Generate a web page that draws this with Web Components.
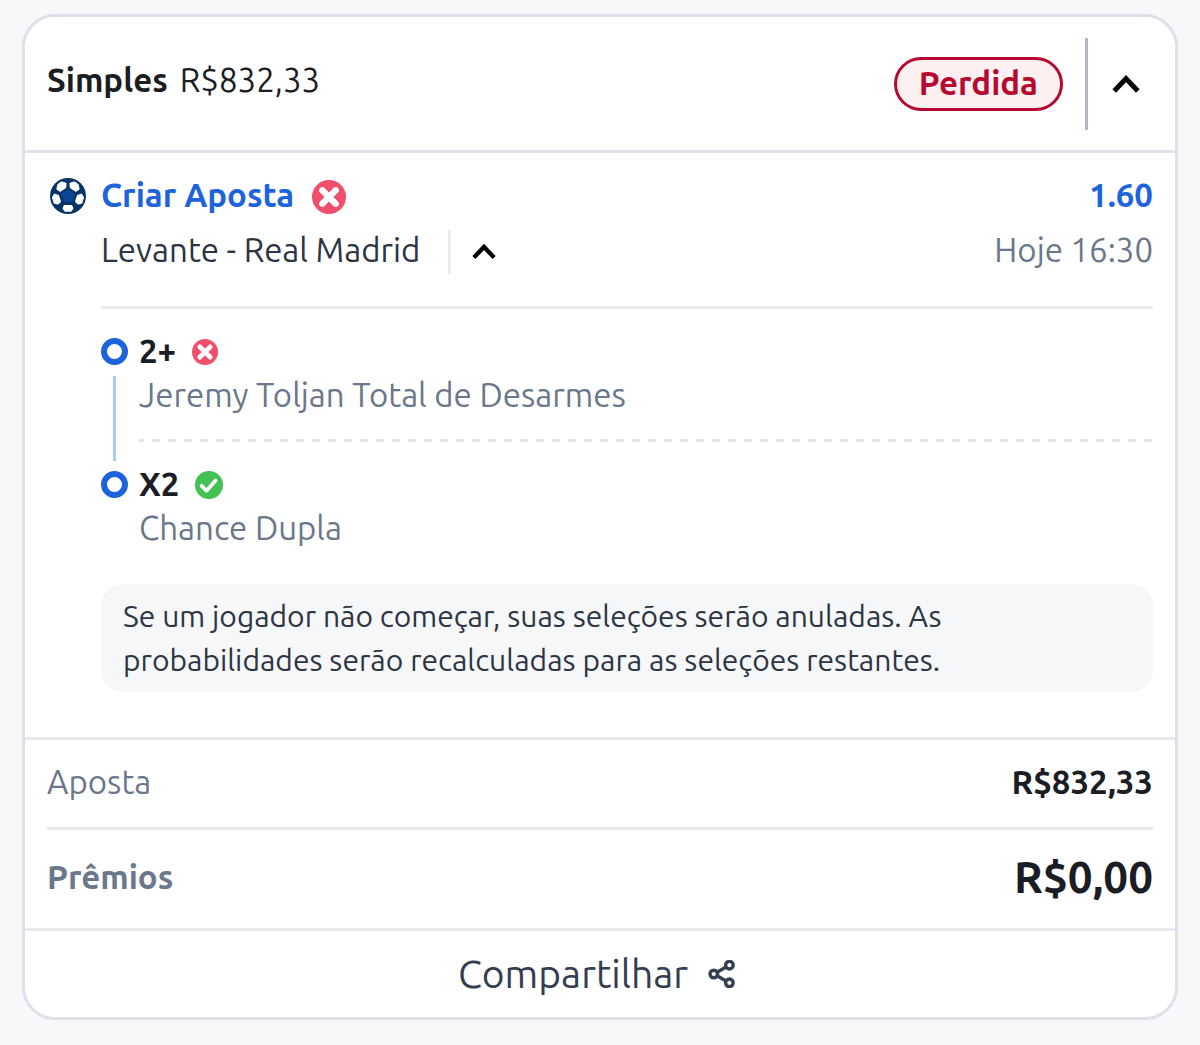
<!DOCTYPE html>
<html lang="pt-BR">
<head>
  <meta charset="utf-8" />
  <meta name="viewport" content="width=device-width, initial-scale=1" />
  <title>Aposta Simples</title>
  <style>
    body {
      margin: 0;
      padding: 14px 22px 25px;
      background-color: #f6f8fa;
      color: #1b1d24;
      font-family: Ubuntu, "Noto Sans", sans-serif;
      font-size: 33px;
      line-height: 44px;
    }
  </style>
</head>
<body>
  <bet-card>
    <bet-header slot="header" kind="Simples" amount="R$832,33">
      <status-badge>Perdida</status-badge>
    </bet-header>
    <bet-event name="Criar Aposta" odds="1.60" match="Levante - Real Madrid" time="Hoje 16:30">
      <bet-leg result="lost" pick="2+" linked>Jeremy Toljan Total de Desarmes</bet-leg>
      <bet-leg result="won" pick="X2">Chance Dupla</bet-leg>
      <bet-note slot="note">Se um jogador não começar, suas seleções serão anuladas. As probabilidades serão recalculadas para as seleções restantes.</bet-note>
    </bet-event>
    <bet-total slot="totals" label="Aposta">R$832,33</bet-total>
    <bet-total slot="totals" label="Prêmios" strong>R$0,00</bet-total>
    <share-button slot="footer">Compartilhar</share-button>
  </bet-card>

  <script>
    class BetCard extends HTMLElement {
      constructor() {
        super();
        this.attachShadow({ mode: "open" });
        this.shadowRoot.innerHTML = `
          <style>
            :host {
              display: block;
              border: 3px solid #dfe1e9;
              border-radius: 33px;
              background-color: #ffffff;
              overflow: hidden;
            }
            header {
              border-bottom: 3px solid #dfe1e9;
            }
            .totals,
            footer {
              border-top: 3px solid #e6e8ee;
            }
            .totals {
              padding: 0 22px;
            }
          </style>
          <article>
            <header><slot name="header"></slot></header>
            <slot></slot>
            <div class="totals"><slot name="totals"></slot></div>
            <footer><slot name="footer"></slot></footer>
          </article>
        `;
      }
    }
    customElements.define("bet-card", BetCard);

    class BetHeader extends HTMLElement {
      constructor() {
        super();
        this.attachShadow({ mode: "open" });
      }

      connectedCallback() {
        this.shadowRoot.innerHTML = `
          <style>
            :host {
              display: flex;
              align-items: center;
              padding: 21px 22px 20px;
            }
            .title {
              display: flex;
              flex: 1;
              gap: 12px;
              padding-bottom: 8px;
            }
            .toggle {
              display: flex;
              align-items: center;
              height: 92px;
              margin-left: 22px;
              padding: 0 13px 0 24px;
              border-left: 3px solid #b4b8c6;
            }
          </style>
          <div class="title">
            <strong>${this.getAttribute("kind")}</strong>
            <span>${this.getAttribute("amount")}</span>
          </div>
          <slot></slot>
          <div class="toggle"><toggle-button label="Recolher aposta"></toggle-button></div>
        `;
      }
    }
    customElements.define("bet-header", BetHeader);

    class StatusBadge extends HTMLElement {
      constructor() {
        super();
        this.attachShadow({ mode: "open" });
        this.shadowRoot.innerHTML = `
          <style>
            :host {
              display: block;
              padding: 1px 22px 3px;
              border: 3px solid #b5092f;
              border-radius: 27px;
              background-color: #feeff1;
              color: #b5092f;
              font-weight: bold;
            }
          </style>
          <slot></slot>
        `;
      }
    }
    customElements.define("status-badge", StatusBadge);

    class ToggleButton extends HTMLElement {
      constructor() {
        super();
        this.attachShadow({ mode: "open" });
      }

      connectedCallback() {
        this.shadowRoot.innerHTML = `
          <style>
            :host {
              display: block;
            }
            button {
              display: block;
              padding: 0;
              border: none;
              background: none;
              color: #000000;
              cursor: pointer;
            }
            svg {
              display: block;
              width: var(--toggle-size, 28px);
            }
          </style>
          <button type="button" aria-expanded="true" aria-label="${this.getAttribute("label")}">
            <svg viewBox="0 0 28 20" fill="none" stroke="currentColor" stroke-width="5">
              <path d="M2.2 17 14 4.6 25.8 17" />
            </svg>
          </button>
        `;
      }
    }
    customElements.define("toggle-button", ToggleButton);

    class ResultIcon extends HTMLElement {
      constructor() {
        super();
        this.attachShadow({ mode: "open" });
      }

      connectedCallback() {
        const won = this.getAttribute("result") === "won";
        this.shadowRoot.innerHTML = `
          <style>
            :host {
              display: block;
              width: var(--result-size, 28px);
            }
            svg {
              display: block;
              width: 100%;
            }
          </style>
          <svg viewBox="0 0 34 34" fill="none" stroke="#ffffff" stroke-linecap="round" stroke-linejoin="round" role="img" aria-label="${won ? "Ganha" : "Perdida"}">
            <circle cx="17" cy="17" r="17" fill="${won ? "#43c153" : "#f04e6c"}" stroke="none" />
            <path d="${won ? "M8 18 14 24 25 11.5" : "M10.3 10.3 23.7 23.7M23.7 10.3 10.3 23.7"}" stroke-width="${won ? "4.6" : "6.4"}" />
          </svg>
        `;
      }
    }
    customElements.define("result-icon", ResultIcon);

    class BetEvent extends HTMLElement {
      constructor() {
        super();
        this.attachShadow({ mode: "open" });
      }

      connectedCallback() {
        this.shadowRoot.innerHTML = `
          <style>
            :host {
              display: grid;
              grid-template-columns: 40px 1fr;
              column-gap: 14px;
              padding: 16px 22px 45px;
            }
            .ball {
              display: block;
              width: 36px;
              margin: 9px 0 0 3px;
            }
            .row {
              display: flex;
              align-items: center;
              height: 55px;
            }
            .row > span {
              padding-bottom: 4px;
            }
            .name,
            .odds {
              color: #1c63dc;
              font-weight: bold;
            }
            result-icon {
              --result-size: 34px;
              margin-left: 18px;
            }
            .match {
              color: #2d3442;
            }
            .odds,
            .time {
              margin-left: auto;
            }
            .time {
              color: #6b778a;
            }
            .toggle {
              display: flex;
              align-items: center;
              height: 44px;
              margin-left: 28px;
              padding-left: 21px;
              border-left: 3px solid #e9ebef;
              --toggle-size: 24px;
            }
            .legs {
              margin-top: 27px;
              padding-top: 21px;
              border-top: 3px solid #e9ebef;
            }
          </style>
          <svg class="ball" viewBox="0 0 36 36" aria-hidden="true">
            <circle cx="18" cy="18" r="18" fill="#073467" />
            <path d="M18 11.2 24.6 16 22.1 23.8H13.9L11.4 16Z" fill="#0a4596" />
            <g fill="#ffffff" stroke="#ffffff" stroke-width="2" stroke-linejoin="round">
              <path d="M8.3 6.8 11.8 4.4 15.6 5.6 15.2 9.4 10.4 12.8 7.4 11Z" />
              <path d="M27.7 6.8 24.2 4.4 20.4 5.6 20.8 9.4 25.6 12.8 28.6 11Z" />
              <path d="M4.8 16.6 8.2 18 10 23.6 7.8 25.6 4.6 24.8 3 19.6Z" />
              <path d="M31.2 16.6 27.8 18 26 23.6 28.2 25.6 31.4 24.8 33 19.6Z" />
              <path d="M14.6 28H21.4L22.4 30.4 20.6 32.8H15.4L13.6 30.4Z" />
            </g>
          </svg>
          <section>
            <div class="row">
              <span class="name">${this.getAttribute("name")}</span>
              <result-icon result="lost"></result-icon>
              <span class="odds">${this.getAttribute("odds")}</span>
            </div>
            <div class="row">
              <span class="match">${this.getAttribute("match")}</span>
              <div class="toggle"><toggle-button label="Recolher seleções"></toggle-button></div>
              <span class="time">${this.getAttribute("time")}</span>
            </div>
            <div class="legs"><slot></slot></div>
            <slot name="note"></slot>
          </section>
        `;
      }
    }
    customElements.define("bet-event", BetEvent);

    class BetLeg extends HTMLElement {
      constructor() {
        super();
        this.attachShadow({ mode: "open" });
      }

      connectedCallback() {
        const result = this.getAttribute("result");
        this.shadowRoot.innerHTML = `
          <style>
            :host {
              display: grid;
              grid-template-columns: 27px 1fr;
              column-gap: 11px;
            }
            .rail {
              display: flex;
              flex-direction: column;
              align-items: center;
              padding-top: 8px;
            }
            .ring {
              box-sizing: border-box;
              width: 27px;
              height: 27px;
              border: 6px solid #1c63dc;
              border-radius: 50%;
            }
            .line {
              display: none;
              flex: 1;
              width: 3px;
              margin: 11px 0 2px;
              background-color: #adc8f5;
            }
            .pick {
              display: flex;
              align-items: center;
              gap: 16px;
              height: 43px;
            }
            .pick strong {
              padding-bottom: 2px;
            }
            :host([result="lost"]) .pick {
              --result-size: 26px;
            }
            .market {
              color: #6b778a;
            }
            :host([linked]) .line {
              display: block;
            }
            .dashes {
              display: none;
              height: 3px;
              margin: 22px 0 21px;
              background: repeating-linear-gradient(90deg, #e3e4ea 0 5px, transparent 5px 13px, #e3e4ea 13px 16px);
            }
            :host([linked]) .dashes {
              display: block;
            }
          </style>
          <div class="rail">
            <span class="ring"></span>
            <span class="line"></span>
          </div>
          <div>
            <div class="pick">
              <strong>${this.getAttribute("pick")}</strong>
              <result-icon result="${result}"></result-icon>
            </div>
            <div class="market"><slot></slot></div>
            <div class="dashes"></div>
          </div>
        `;
      }
    }
    customElements.define("bet-leg", BetLeg);

    class BetNote extends HTMLElement {
      constructor() {
        super();
        this.attachShadow({ mode: "open" });
        this.shadowRoot.innerHTML = `
          <style>
            :host {
              display: block;
              margin-top: 34px;
              padding: 10px 22px;
              border-radius: 22px;
              background-color: #f6f7f9;
              color: #2d3442;
              font-size: 30px;
            }
            p {
              max-width: 860px;
              margin: 0;
            }
          </style>
          <p><slot></slot></p>
        `;
      }
    }
    customElements.define("bet-note", BetNote);

    class BetTotal extends HTMLElement {
      constructor() {
        super();
        this.attachShadow({ mode: "open" });
      }

      connectedCallback() {
        this.shadowRoot.innerHTML = `
          <style>
            :host {
              display: flex;
              align-items: center;
              justify-content: space-between;
              padding: 20px 0 23px;
            }
            :host([strong]) {
              padding: 25px 0 29px;
              border-top: 3px solid #e6e8ee;
            }
            .label {
              color: #6b778a;
            }
            .value,
            :host([strong]) .label {
              font-weight: bold;
            }
            :host([strong]) .value {
              font-size: 44px;
            }
          </style>
          <span class="label">${this.getAttribute("label")}</span>
          <span class="value"><slot></slot></span>
        `;
      }
    }
    customElements.define("bet-total", BetTotal);

    class ShareButton extends HTMLElement {
      constructor() {
        super();
        this.attachShadow({ mode: "open" });
        this.shadowRoot.innerHTML = `
          <style>
            :host {
              display: block;
            }
            button {
              display: flex;
              align-items: center;
              justify-content: center;
              gap: 20px;
              width: 100%;
              padding: 21px 6px 21px 0;
              border: none;
              background: none;
              color: #343e50;
              font: inherit;
              font-size: 39px;
              line-height: 44px;
              cursor: pointer;
            }
            svg {
              width: 28px;
            }
          </style>
          <button type="button">
            <slot></slot>
            <svg viewBox="0 0 28 28" fill="none" stroke="currentColor" stroke-width="3.4" aria-hidden="true">
              <circle cx="5.8" cy="14" r="3.8" />
              <circle cx="21.4" cy="5.2" r="3.8" />
              <circle cx="21.4" cy="22.8" r="3.8" />
              <path d="M9 12.2 18.2 7M9 15.8 18.2 21" />
            </svg>
          </button>
        `;
      }
    }
    customElements.define("share-button", ShareButton);
  </script>
</body>
</html>
